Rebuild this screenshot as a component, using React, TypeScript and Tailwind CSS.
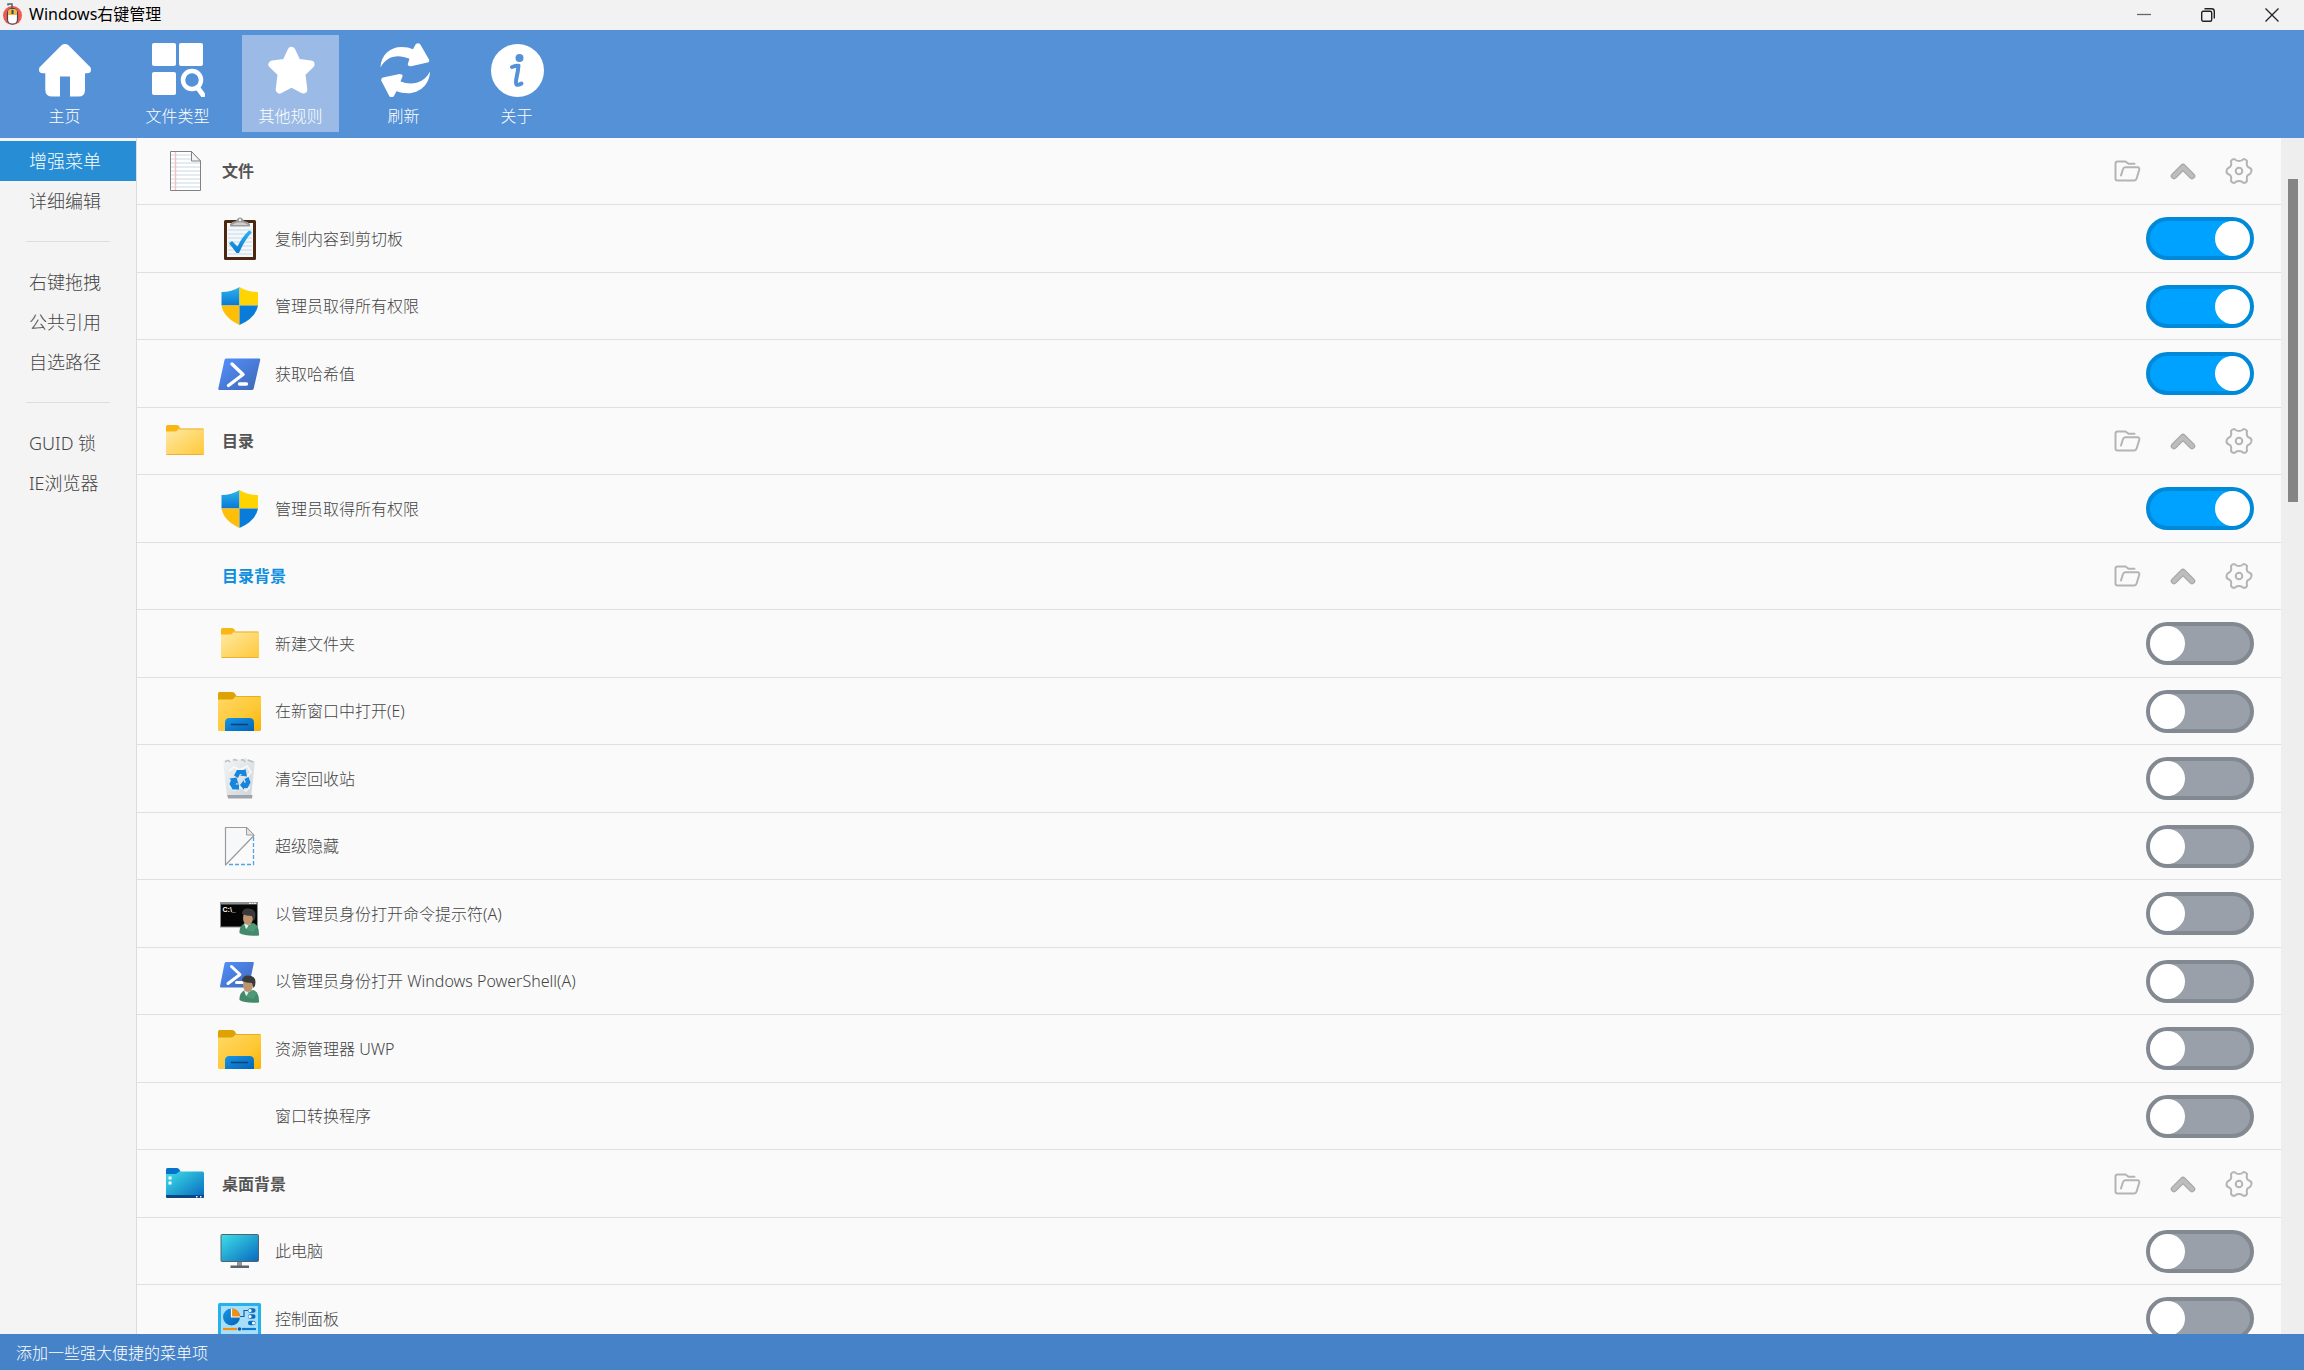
import { useState, type ReactNode } from "react";
import { clsx } from "clsx";

/* ---------- Toolbar icons ---------- */

const HomeIcon = () => (
  <svg viewBox="0 0 54 54" className="size-[54px]" fill="#fff">
    <path d="M23.5 2.3q3.5-2.8 7 0L52.6 24.6q1.6 5.6-3.6 5.6H47V47q0 6.600-6.600 6.600H32V33.500H22V53.600H14.600Q7.300 53.600 7.300 47V30.200H5Q-.200 30.200 1.400 24.600z" />
  </svg>
);

const FileTypeIcon = () => (
  <svg viewBox="0 0 54 54" className="size-[54px]" fill="#fff">
    <rect x="1" y="0" width="24" height="23" rx="2" />
    <rect x="28" y="0" width="24" height="23" rx="2" />
    <rect x="1" y="29" width="24" height="23" rx="2" />
    <circle cx="41" cy="37" r="9" fill="none" stroke="#fff" strokeWidth="4.500" />
    <path d="M46.500 44.500 52 52" stroke="#fff" strokeWidth="5" strokeLinecap="round" />
  </svg>
);

const StarIcon = () => (
  <svg viewBox="0 0 54 54" className="size-[54px]" fill="#fff" stroke="#fff" strokeWidth="8" strokeLinejoin="round">
    <path d="M27.500 8 33 19.800 46.500 21.500 37.300 30.500 39.300 46.500 27.500 40.300 15.700 46.500 17.700 30.500 8.500 21.500 22 19.800z" />
  </svg>
);

const RefreshIcon = () => (
  <svg viewBox="0 0 54 54" className="size-[54px]" fill="#fff">
    <path d="M3.500 24.500C4 12 13 4 24.500 4q7 0 11.500 2.300L38.500 1.500Q41-1 43.200 1.200L52 16.500Q53 18.800 50.500 19.600L34 23.200Q30 23.500 31 20.500L32.500 15.800C20 10.500 9.500 13.500 3.500 24.500z" />
    <path d="M53 28.500C52.500 42 42.500 50 31 50.300q-7 0-11.500-2L17 53Q15 55.500 12.500 53.500L4.200 37.500Q4 35 6 34.500L22.500 31Q26 31 25.500 33.500L23.500 38.500C35 43 47.500 40 53 28.500z" />
  </svg>
);

const AboutIcon = () => (
  <svg viewBox="0 0 54 54" className="size-[54px]">
    <circle cx="27.500" cy="27.500" r="26.500" fill="#fff" />
    <circle cx="29.500" cy="15" r="4" fill="#5591d7" />
    <path d="M22 24q4-1.500 6.500-1.300-.5 6-2 12-1 5.500 0 6.800 1.500 1 5-1" fill="none" stroke="#5591d7" strokeWidth="4" strokeLinecap="round" strokeLinejoin="round" />
  </svg>
);

/* ---------- Row icons ---------- */

const RowIcon = ({ children }: { children?: ReactNode }) => (
  <svg viewBox="0 0 44 44" className="size-11 shrink-0" aria-hidden="true">
    <defs>
      <linearGradient id="folder" x1="0" y1="0" x2="1" y2="1">
        <stop offset="0" stopColor="#ffe9a6" />
        <stop offset="1" stopColor="#ffc938" />
      </linearGradient>
      <linearGradient id="explorer" x1="0" y1="0" x2="1" y2="1">
        <stop offset="0" stopColor="#ffd866" />
        <stop offset="0.600" stopColor="#fec835" />
        <stop offset="1" stopColor="#f8b200" />
      </linearGradient>
      <linearGradient id="teal" x1="0" y1="0" x2="1" y2="1">
        <stop offset="0" stopColor="#3de0e8" />
        <stop offset="1" stopColor="#0868be" />
      </linearGradient>
      <linearGradient id="blue" x1="0" y1="0" x2="1" y2="1">
        <stop offset="0" stopColor="#1796e6" />
        <stop offset="1" stopColor="#0563b5" />
      </linearGradient>
      <linearGradient id="shell" x1="0" y1="0" x2="1" y2="1">
        <stop offset="0" stopColor="#5391fe" />
        <stop offset="1" stopColor="#3e67b4" />
      </linearGradient>
      <linearGradient id="sky" x1="0" y1="0" x2="0" y2="1">
        <stop offset="0" stopColor="#2cb4ee" />
        <stop offset="1" stopColor="#0b78d2" />
      </linearGradient>
      <linearGradient id="bin" x1="0" y1="0" x2="1" y2="1">
        <stop offset="0" stopColor="#f4f6f7" />
        <stop offset="1" stopColor="#ccd3d9" />
      </linearGradient>
    </defs>
    {children}
  </svg>
);

const FileIcon = () => (
  <RowIcon>
    <path d="M7.500 2.500h21l9 9.500v29.500h-30z" fill="#fff" />
    {[5, 9, 13, 17, 21, 25, 29, 33, 37].map((y) => (
      <path key={y} d={`M8 ${y}H${y < 12 ? 28 : 37}v2H8z`} fill="#e4ebf1" />
    ))}
    <path d="M12.500 3v38" stroke="#f9c0c2" strokeWidth="1.500" />
    <path d="M7.500 2.500h21l9 9.500v29.500h-30z" fill="none" stroke="#828282" />
    <path d="M28.500 2.500v9.500h9z" fill="#f4f4f4" stroke="#828282" />
  </RowIcon>
);

const ClipboardIcon = () => (
  <RowIcon>
    <rect x="6" y="3" width="32" height="40" rx="1.500" fill="#4b2611" />
    <rect x="9" y="6" width="26" height="34" fill="#f4f8fb" />
    {[13, 17, 21, 25, 29, 33, 37].map((y) => (
      <path key={y} d={`M10 ${y}h24`} stroke="#d7e3ed" strokeWidth="1.500" />
    ))}
    <path d="M12 9.500V7q2-2.500 6-3Q19.500.500 22 .500T26 4q4 .500 6 3v2.500z" fill="#9a9a9a" />
    <path d="M14 8q2-2 5.500-2.500h5Q28 6 30 8z" fill="#cfcfcf" />
    <circle cx="22" cy="3" r="1.200" fill="#f0f0f0" />
    <path d="M11 26.500 14 24l5.500 5.500Q24 20 31 13.500l3 1.500Q26 24 21 36h-2.500Q15 31 11 26.500z" fill="url(#sky)" />
  </RowIcon>
);

const ShieldIcon = () => (
  <RowIcon>
    <path d="M21.500 3Q14 8 3.500 8v13.500h18z" fill="url(#sky)" />
    <path d="M21.500 3Q29 8 40 8v13.500H21.500z" fill="#ffd400" />
    <path d="M3.500 21.500h18V41Q5.500 33.500 3.500 21.500z" fill="#ffbf08" />
    <path d="M40 21.500H21.500V41Q38 33.500 40 21.500z" fill="#087cd8" />
  </RowIcon>
);

const PowerShellIcon = () => (
  <RowIcon>
    <path d="M8 6.500h33q1.500 0 1.200 1.500l-6.500 28.500q-.400 1.500-2 1.500H1.500q-1.500 0-1.200-1.500L6.500 8q.300-1.500 1.500-1.500z" fill="url(#shell)" />
    <path d="M14 12l11 10.500L10.500 33.500M21.500 32h7" fill="none" stroke="#fff" strokeWidth="3.400" strokeLinecap="round" strokeLinejoin="round" />
  </RowIcon>
);

const FolderIcon = () => (
  <RowIcon>
    <path d="M3 7.500Q3 6 4.500 6h9q1.500 0 2.500 1l1.500 2.500L14 13H3z" fill="#f9b713" />
    <path d="M3 12.500h9q1.500 0 2.500-1.200L16 9.500h23.500q1.500 0 1.500 1.500v23.500q0 1.500-1.500 1.500h-35Q3 36 3 34.500z" fill="url(#folder)" />
    <path d="M16 10h24.500M3.500 35.500h37" stroke="#eeb032" />
  </RowIcon>
);

const ExplorerIcon = () => (
  <RowIcon>
    <path d="M0 4.500Q0 3 1.500 3H14q1.500 0 2.500 1l2 3-3 4H0z" fill="#dda203" />
    <path d="M0 10.500h13q2 0 3-1.500l2-2h23.500Q43 7 43 8.500v32q0 1.500-1.500 1.500h-40Q0 42 0 40.500z" fill="url(#explorer)" />
    <path d="M18 7.500h24.500" stroke="#eaae16" />
    <path d="M7 42v-8.500Q7 29 11.500 29h20q4.500 0 4.500 4.500V42z" fill="url(#blue)" />
    <path d="M13.500 35.500h16" stroke="#0b3f7c" strokeWidth="1.500" strokeLinecap="round" />
  </RowIcon>
);

const RecycleIcon = () => (
  <RowIcon>
    <path d="M5 4 9 2l4 2 4-3 5 2 5-2 4 2 6 1-4 36H9z" fill="url(#bin)" />
    <path d="M7 5q3-3 5 0m3-2q3-1 4 1m4-1q3-1 4 2m3-2 5 2" fill="none" stroke="#b9bec2" strokeWidth="1.500" />
    <path d="m11 14 5-4 6 3 7-4 4 6-4 5M11 29l5 4 6-3 6 4 4-4" fill="none" stroke="#fff" strokeWidth="1.500" opacity="0.800" />
    <path d="M9.500 38h25L34 41.500H10z" fill="#9da5ab" />
    <g fill="#1586dc">
      <path d="m16 18.500 3-5.500h7l1.500-1 1.500 7.500-7-1 2-1.500h-2l-2 4z" />
      <path d="m26.500 22 4-2 2 5.500-3 5.500H26v2l-4-5 4-5v2.500h2z" />
      <path d="m11.500 21.500 7-1 2 6.500-2-1-1 1.500H21v5h-6.500L11.500 27l1.500-4z" />
    </g>
  </RowIcon>
);

const HiddenIcon = () => (
  <RowIcon>
    <path d="M7.500 3.500h21l7.500 8L7.500 41z" fill="#f6f8f9" />
    <path d="M7.500 41V3.500h21l7.500 8z" fill="none" stroke="#9b9b9b" strokeWidth="1.200" strokeLinejoin="round" />
    <path d="M28.500 3.500v7.500h7.500z" fill="#e6e6e6" stroke="#9b9b9b" />
    <path d="M35.500 13v27.500H9" fill="none" stroke="#4da6ec" strokeWidth="1.300" strokeDasharray="4 2" />
  </RowIcon>
);

const UserBadge = () => (
  <g>
    <path d="M21.500 41q-.500-7 5.500-10l9 .500q5.500 2.500 5 12-14 1-19.500-2.500z" fill="#43896a" />
    <path d="m26 31.500 2 5.500 6-5z" fill="#e6eff0" />
    <path d="m28.500 38 2-5 5-2 4 3-4 6z" fill="#4d9a77" />
    <ellipse cx="30" cy="26" rx="5" ry="7" fill="#bd9370" />
    <path d="M24 22q0-5.500 6-5.500 7.500 0 7.500 6.500 0 4-2 6l-1.500-5q-6 0-10-2z" fill="#3a3a3a" />
  </g>
);

const CommandIcon = () => (
  <RowIcon>
    <rect x="2" y="10" width="38" height="25.500" fill="#8b8f92" />
    <rect x="3" y="12.500" width="36" height="22" fill="#050505" />
    <path d="M31 11.300h7" stroke="#fff" strokeDasharray="2 0.500" />
    <text x="4.500" y="19.500" fill="#fff" fontSize="7" fontWeight="700" fontFamily="Liberation Sans, sans-serif">C:\_</text>
    <UserBadge />
  </RowIcon>
);

const PowerShellAdminIcon = () => (
  <RowIcon>
    <path d="M8 3h27q1 0 .800 1.200L31 27q-.300 1.500-1.800 1.500H3q-1.200 0-1-1.200L6.500 4.500Q6.800 3 8 3z" fill="url(#shell)" />
    <path d="m13.500 7.500 8.500 8L10 24.500M18.500 23.500h6" fill="none" stroke="#fff" strokeWidth="3" strokeLinecap="round" strokeLinejoin="round" />
    <UserBadge />
  </RowIcon>
);

const DesktopFolderIcon = () => (
  <RowIcon>
    <path d="M3 7.500Q3 6 4.500 6h9q1.500 0 2.500 1l1.500 2.500L14 13H3z" fill="#0772cc" />
    <path d="M3 12h9q1.500 0 2.500-1L16 9.500h23.500q1.500 0 1.500 1.500v23.500q0 1.500-1.500 1.500h-35Q3 36 3 34.500z" fill="url(#teal)" />
    <path d="M3 33h38v1.500q0 1.500-1.500 1.500h-35Q3 36 3 34.500z" fill="#0a467f" />
    <path d="M5.500 14.500h3v3h-3zM5.500 19.500h3v3h-3zM33 34h1.500v1.500H33zM37 34h1.500v1.500H37z" fill="#fff" />
  </RowIcon>
);

const ComputerIcon = () => (
  <RowIcon>
    <path d="M19 32h5v5h-5z" fill="#8d969c" />
    <path d="M12.500 36.500h18.500v2.500H12.500z" fill="#5b6368" />
    <rect x="3" y="5.500" width="37.500" height="27" rx="1" fill="url(#teal)" stroke="#58616a" />
  </RowIcon>
);

const ControlPanelIcon = () => (
  <RowIcon>
    <rect x="0" y="6" width="43" height="34" rx="1.500" fill="#25b1ec" />
    <rect x="3" y="9" width="37" height="28" fill="#a8dff8" />
    <circle cx="13.500" cy="20" r="8.500" fill="url(#blue)" />
    <path d="M13.500 11.500a8.500 8.500 0 0 1 8.500 8.500h-8.500z" fill="#f78d0c" />
    <path d="M13.500 11.500V20H22" fill="none" stroke="#fff" strokeWidth="1.200" />
    <path d="M22 19.500h4v-6h4" fill="none" stroke="#0c60ad" strokeWidth="1.200" />
    {[13.5, 19.5, 26].map((y) => (
      <g key={y}>
        <rect x="30" y={y - 2.2} width="7.500" height="4.400" rx="2.200" fill="#0b6cc0" />
        <circle cx={y === 26 ? 35.5 : 32} cy={y} r="1.600" fill="#fff" />
      </g>
    ))}
    <path d="M5 32h14" stroke="#f78d0c" strokeWidth="2.200" />
    <path d="M24 32h14" stroke="#0b7ad0" strokeWidth="2.200" />
    <circle cx="21.500" cy="32" r="1.800" fill="#0b5cab" />
  </RowIcon>
);

/* ---------- Group action icons ---------- */

const OpenIcon = () => (
  <svg viewBox="0 0 28 28" className="size-7" fill="none" stroke="#b4b4b4" strokeWidth="2" strokeLinecap="round" strokeLinejoin="round">
    <path d="M21.500 6.800H15.500L12.500 4.500H4.500Q2.500 4.500 2.500 6.500V21.500Q2.500 23.500 4.500 23.500H21Q23 23.500 23.600 21.500L26.200 13Q26.800 10.200 24.500 10.200H12.500Q10.500 10.200 10 12L8 18.500" />
  </svg>
);

const FoldIcon = () => (
  <svg viewBox="0 0 28 28" className="size-7" fill="none" strokeLinecap="round" strokeLinejoin="round">
    <path d="M5 19 14 10 23 19" stroke="#a8a8a8" strokeWidth="6.500" />
    <path d="M5 19 14 10 23 19" stroke="#bdbdbd" strokeWidth="4" />
  </svg>
);

const GearIcon = () => (
  <svg viewBox="0 0 28 28" className="size-7" fill="none" stroke="#b4b4b4" strokeWidth="2" strokeLinejoin="round">
    <path d="M9.500 2Q11 4 14 4T18.500 2Q21 2 22 4 21 9.500 24 10.500 26.800 11.500 26.500 14T24 17.500Q21 18.500 22 24 21 26 18.500 26 17 24 14 24T9.500 26Q7 26 6 24 7 18.500 4 17.500 1.200 16.500 1.500 14T4 10.500Q7 9.500 6 4 7 2 9.500 2z" />
    <circle cx="14" cy="14" r="3.300" />
  </svg>
);

/* ---------- Data ---------- */

const tools = [
  { label: "主页", icon: <HomeIcon /> },
  { label: "文件类型", icon: <FileTypeIcon /> },
  { label: "其他规则", icon: <StarIcon /> },
  { label: "刷新", icon: <RefreshIcon /> },
  { label: "关于", icon: <AboutIcon /> },
];

const sections = [
  ["增强菜单", "详细编辑"],
  ["右键拖拽", "公共引用", "自选路径"],
  ["GUID 锁", "IE浏览器"],
];

type Row = { text: string; icon?: ReactNode; group?: boolean; current?: boolean; on?: boolean };

const rows: Row[] = [
  { text: "文件", icon: <FileIcon />, group: true },
  { text: "复制内容到剪切板", icon: <ClipboardIcon />, on: true },
  { text: "管理员取得所有权限", icon: <ShieldIcon />, on: true },
  { text: "获取哈希值", icon: <PowerShellIcon />, on: true },
  { text: "目录", icon: <FolderIcon />, group: true },
  { text: "管理员取得所有权限", icon: <ShieldIcon />, on: true },
  { text: "目录背景", group: true, current: true },
  { text: "新建文件夹", icon: <FolderIcon /> },
  { text: "在新窗口中打开(E)", icon: <ExplorerIcon /> },
  { text: "清空回收站", icon: <RecycleIcon /> },
  { text: "超级隐藏", icon: <HiddenIcon /> },
  { text: "以管理员身份打开命令提示符(A)", icon: <CommandIcon /> },
  { text: "以管理员身份打开 Windows PowerShell(A)", icon: <PowerShellAdminIcon /> },
  { text: "资源管理器 UWP", icon: <ExplorerIcon /> },
  { text: "窗口转换程序" },
  { text: "桌面背景", icon: <DesktopFolderIcon />, group: true },
  { text: "此电脑", icon: <ComputerIcon /> },
  { text: "控制面板", icon: <ControlPanelIcon /> },
];

/* ---------- Page ---------- */

const TitleBar = () => (
  <header className="flex h-[30px] shrink-0 items-center bg-[#f2f2f2] pl-[2px] text-black">
    <svg viewBox="0 0 22 24" className="h-6 w-[22px]">
      <circle cx="10.500" cy="12.500" r="9.500" fill="#f2584e" />
      <path d="M6 2.500V1h4v4" fill="none" stroke="#50606f" strokeWidth="1.500" />
      <rect x="5.500" y="5.500" width="10" height="15.500" rx="4.500" fill="#fff" stroke="#34495e" strokeWidth="1.200" />
      <path d="M6 12V9q0-3 3-3h3q3 0 3 3v3z" fill="#f4b63f" />
      <path d="M10.500 7v4" stroke="#34495e" strokeWidth="2" />
    </svg>
    <h1 className="ml-[5px] flex-1 pb-[2px] text-base leading-6">Windows右键管理</h1>
    <button aria-label="最小化" className="flex h-full w-16 items-center justify-center">
      <svg viewBox="0 0 14 14" className="size-[14px]" stroke="#666" strokeWidth="1.300">
        <path d="M0 6.500h14" />
      </svg>
    </button>
    <button aria-label="还原" className="flex h-full w-16 items-center justify-center">
      <svg viewBox="0 0 14 14" className="size-[14px]" fill="none" stroke="#222" strokeWidth="1.400">
        <rect x="0.700" y="3.300" width="10" height="10" rx="1.500" />
        <path d="M3.500.800H10.500Q13.300.800 13.300 3.500V10.500" />
      </svg>
    </button>
    <button aria-label="关闭" className="flex h-full w-16 items-center justify-center">
      <svg viewBox="0 0 14 14" className="size-[14px]" stroke="#222" strokeWidth="1.300">
        <path d="M.500.500l13 13M13.500.500l-13 13" />
      </svg>
    </button>
  </header>
);

export default function App() {
  const [tool, setTool] = useState("其他规则");
  const [section, setSection] = useState("增强菜单");
  const [enabled, setEnabled] = useState(() => rows.map((row) => !!row.on));

  const toggle = (index: number) => setEnabled(enabled.map((value, i) => (i === index ? !value : value)));

  return (
    <div className="flex h-screen flex-col overflow-hidden font-['Noto_Sans','Noto_Sans_CJK_SC',sans-serif]">
      <TitleBar />

      <nav className="flex h-[108px] shrink-0 gap-4 bg-[#5591d7] px-4 pt-[5px]">
        {tools.map(({ label, icon }) => (
          <button
            key={label}
            onClick={() => setTool(label)}
            className={clsx("flex size-[97px] flex-col items-center gap-[7px] pt-2 text-base leading-6 font-light text-white", tool === label && "bg-[#9bbbe6]")}
          >
            {icon}
            {label}
          </button>
        ))}
      </nav>

      <div className="flex min-h-0 flex-1">
        <aside className="w-[137px] shrink-0 border-r border-[#dcdcdc] bg-[#f4f4f4] pt-[3px] text-lg font-light text-[#444]">
          {sections.map((items, index) => (
            <div key={items[0]}>
              {index > 0 && (
                <div className="flex h-[41px] items-center px-[26px]">
                  <hr className="w-full border-[#dedede]" />
                </div>
              )}
              {items.map((item) => (
                <button
                  key={item}
                  onClick={() => setSection(item)}
                  className={clsx("block h-10 w-full pl-[29px] text-left leading-[39px]", section === item && "bg-[#278dd4] text-white")}
                >
                  {item}
                </button>
              ))}
            </div>
          ))}
        </aside>

        <main className="min-w-0 flex-1 overflow-hidden bg-[#fafafa] text-base">
          <ul>
            {rows.map((row, index) => (
              <li
                key={index}
                className={clsx(
                  "flex items-center border-b border-[#e0e0e0] odd:h-[67px] even:h-[68px]",
                  row.group ? "gap-[15px] pr-7 pl-[26px]" : "gap-[13px] pr-[27px] pl-[81px]",
                )}
              >
                {row.icon ?? <RowIcon />}
                {row.group ? (
                  <>
                    <h2 className={clsx("flex-1 font-bold", row.current ? "text-[#0f8fe0]" : "text-[#555]")}>{row.text}</h2>
                    <div className="flex gap-7">
                      <button aria-label="打开"><OpenIcon /></button>
                      <button aria-label="折叠"><FoldIcon /></button>
                      <button aria-label="设置"><GearIcon /></button>
                    </div>
                  </>
                ) : (
                  <>
                    <label htmlFor={`item-${index}`} className="flex-1 font-light text-[#444]">{row.text}</label>
                    <input
                      id={`item-${index}`}
                      type="checkbox"
                      role="switch"
                      checked={enabled[index]}
                      onChange={() => toggle(index)}
                      className="flex h-[43px] w-[108px] appearance-none items-center rounded-full border-4 border-[#828991] bg-[#99a0aa] before:size-[35px] before:rounded-full before:bg-white checked:justify-end checked:border-[#0089d9] checked:bg-[#00a2ff]"
                    />
                  </>
                )}
              </li>
            ))}
          </ul>
        </main>

        {/* Scroll bar */}
        <div className="w-[23px] shrink-0 bg-[#eee] pt-[41px] pl-[7px]">
          <div className="h-[28%] w-[10px] bg-[#858585]" />
        </div>
      </div>

      <footer className="flex h-9 shrink-0 items-center bg-[#4682c8] px-4 pt-[2px] text-base font-light text-white">添加一些强大便捷的菜单项</footer>
    </div>
  );
}
